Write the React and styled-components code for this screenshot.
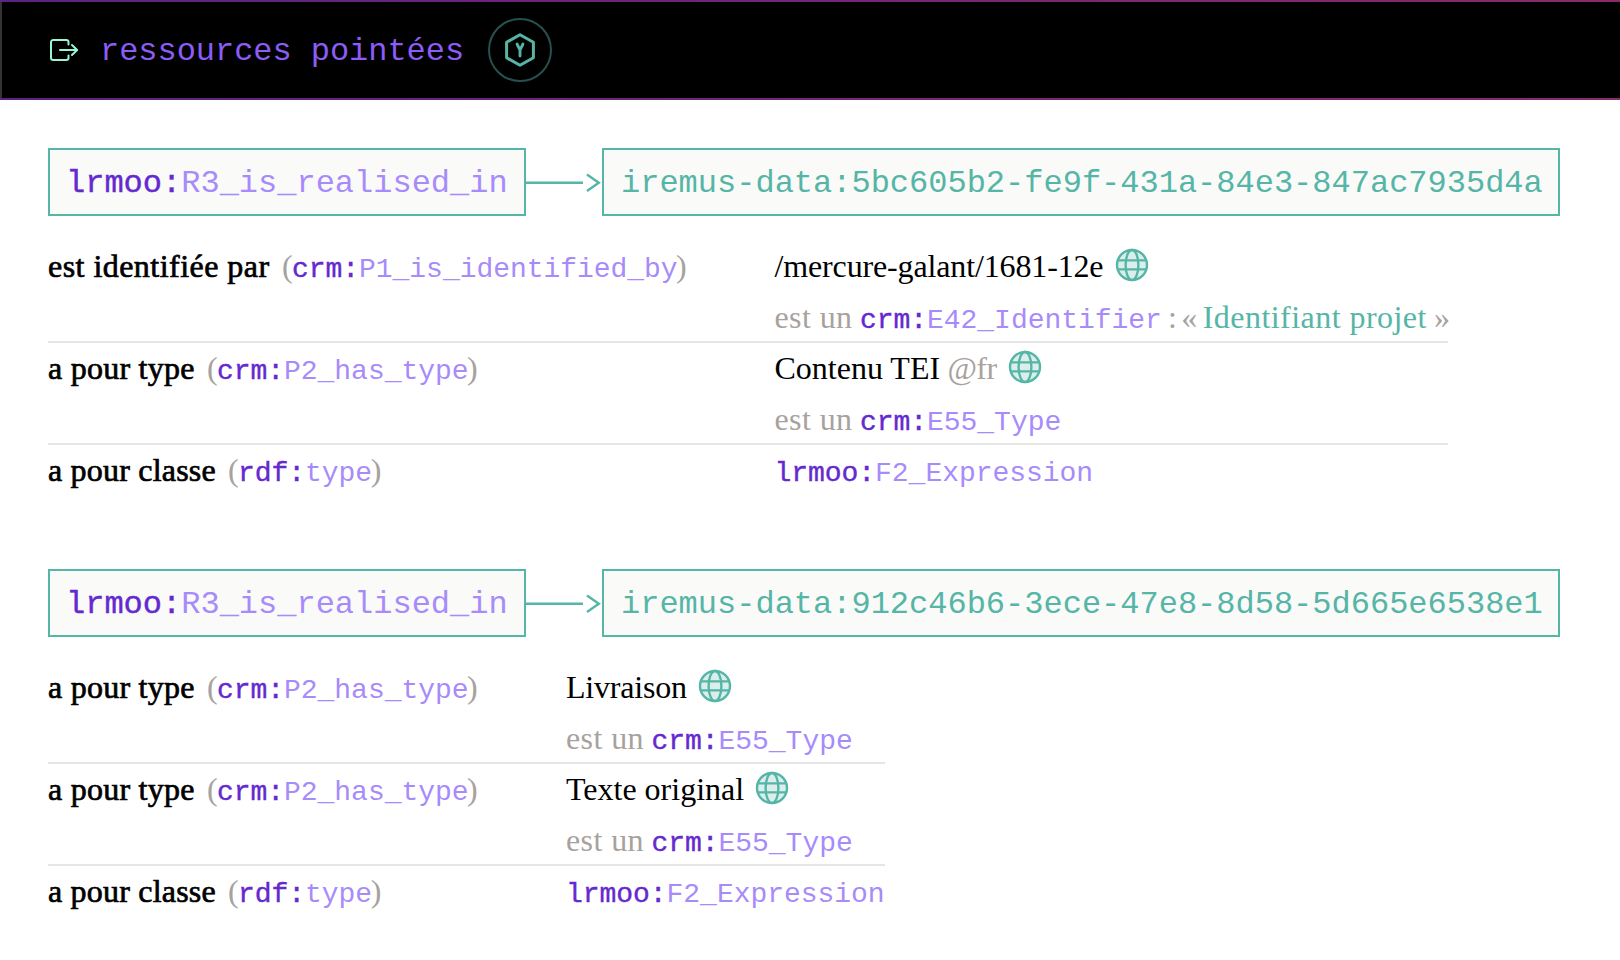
import React from "react";
import styled, { createGlobalStyle } from "styled-components";

const GlobalStyle = createGlobalStyle`
  * { box-sizing: border-box; }
  body { margin: 0; background: #fff; font-family: "Liberation Serif", serif; font-size: 32px; color: #000; }
`;

const Header = styled.header`
  display: flex;
  align-items: center;
  height: 100px;
  padding-left: 48px;
  border: 0 solid transparent;
  border-width: 2px 0;
  box-shadow: inset 2px 0 0 #333;
  background:
    linear-gradient(#000, #000) padding-box,
    linear-gradient(90deg, #5b2383, #8a2a6b) border-box;
`;

const Title = styled.h1`
  margin: 0 0 0 20px;
  padding-top: 4px;
  width: 364px;
  font: 400 32px/44px "Liberation Mono", monospace;
  letter-spacing: -0.04px;
  color: #8b5cf6;
  white-space: pre;
`;

const Badge = styled.div`
  display: flex;
  align-items: center;
  justify-content: center;
  width: 64px;
  height: 64px;
  margin-left: 24px;
  border: 2px solid #25514f;
  border-radius: 50%;
`;

const Main = styled.main`
  padding: 48px 48px 0;
`;

const Resource = styled.section`
  height: 421px;
`;

const Relation = styled.div`
  display: flex;
  align-items: center;
  height: 68px;
`;

const Box = styled.div`
  width: ${(p) => p.$w}px;
  height: 68px;
  padding: 2px 0 0 ${(p) => p.$pad || 16}px;
  border: 2px solid #55b5a6;
  background: #fafaf9;
  font: 400 32px/64px "Liberation Mono", monospace;
  color: #55b5a6;
  white-space: nowrap;
`;

const ArrowDrawing = styled.svg`
  flex: none;
  width: 76px;
  height: 32px;
`;

const Prefix = styled.span`
  color: #6429cf;
  -webkit-text-stroke: 0.4px #6429cf;
`;

const Local = styled.span`
  color: #a78bfa;
`;

const Code = styled.span`
  font-family: "Liberation Mono", monospace;
  font-size: 28px;
  line-height: 1;
  letter-spacing: -0.04px;
`;

const Properties = styled.div`
  width: ${(p) => p.$width}px;
  margin-top: 25px;
`;

const Row = styled.div`
  display: grid;
  grid-template-columns: ${(p) => p.$label}px 1fr;
  height: 102px;
  border-bottom: ${(p) => (p.$last ? "0" : "2px solid #e5e5e5")};
  white-space: nowrap;
`;

const Line = styled.div`
  height: 51px;
  line-height: 51px;
`;

const Text = styled.span`
  display: inline-block;
  width: ${(p) => (p.$w ? `${p.$w}px` : "auto")};
  margin-left: ${(p) => p.$ml || 0}px;
  letter-spacing: ${(p) => p.$ls || 0}px;
  color: ${(p) => p.$color || "#000"};
  -webkit-text-stroke: ${(p) => (p.$medium ? "0.7px #000" : "0")};
  white-space: pre;
`;

const Globe = styled.svg`
  margin-left: 11px;
  vertical-align: -5px;
`;

const GREY = "#a8a29e";

function Term({ name }) {
  const [prefix, local] = name.split(":");
  return (
    <>
      <Prefix>{prefix}:</Prefix>
      <Local>{local}</Local>
    </>
  );
}

function GlobeIcon() {
  return (
    <Globe width="34" height="34" viewBox="0 0 34 34" fill="none" stroke="#55b5a6" strokeWidth="2.4">
      <circle cx="17" cy="17" r="15" fill="#dceeeb" />
      <ellipse cx="17" cy="17" rx="6.4" ry="15" />
      <path d="M3 12.4h28M3 21.4h28" />
    </Globe>
  );
}

function ExportIcon() {
  return (
    <svg width="32" height="32" viewBox="0 0 32 32" fill="none" stroke="#99f6d4" strokeWidth="2" strokeLinecap="round" strokeLinejoin="round">
      <path d="M20.5 10.5V8.200A2.200 2.200 0 0 0 18.300 6H5.200A2.200 2.200 0 0 0 3 8.200V23.800A2.200 2.200 0 0 0 5.200 26H18.300A2.200 2.200 0 0 0 20.500 23.800V21.500M12 16h17M24 11l5.200 5-5.200 5" />
    </svg>
  );
}

function HexagonIcon() {
  return (
    <svg width="32" height="36" viewBox="0 0 32 36" fill="none" stroke="#55b5a6" strokeLinejoin="round" strokeLinecap="round">
      <path d="M16 2.800 29.400 10.200v15.600L16 33.200 2.600 25.800V10.200z" strokeWidth="3" />
      <path d="M13 12l3 6 3-6M16 18v6" strokeWidth="2.8" />
    </svg>
  );
}

function Arrow() {
  return (
    <ArrowDrawing viewBox="0 0 76 32" fill="none" stroke="#55b5a6" strokeWidth="2.4">
      <path d="M0 16.700h57M61 8.500l11.800 8.200L61 25" />
    </ArrowDrawing>
  );
}

function Label({ text, w, ls, term }) {
  return (
    <Line>
      <Text $w={w} $ls={ls} $medium>{text}</Text>
      <Text $color={GREY} $w={10}>(</Text>
      <Code><Term name={term} /></Code>
      <Text $color={GREY} $ml={-1.5}>)</Text>
    </Line>
  );
}

const resources = [
  {
    id: "5bc605b2-fe9f-431a-84e3-847ac7935d4a",
    width: 1400,
    label: 726.5,
    rows: [
      { label: "est identifiée par", w: 234, ls: 0.46, term: "crm:P1_is_identified_by", value: "/mercure-galant/1681-12e", vw: 329, vls: -0.14, cls: "crm:E42_Identifier", kind: "Identifiant projet" },
      { label: "a pour type", w: 159, ls: 0.25, term: "crm:P2_has_type", value: "Contenu TEI", vw: 173, lang: "@fr", cls: "crm:E55_Type" },
      { label: "a pour classe", w: 180, ls: 0.2, term: "rdf:type", cls: "lrmoo:F2_Expression" },
    ],
  },
  {
    id: "912c46b6-3ece-47e8-8d58-5d665e6538e1",
    width: 837,
    label: 518,
    rows: [
      { label: "a pour type", w: 159, ls: 0.25, term: "crm:P2_has_type", value: "Livraison", vw: 121, vls: -0.2, cls: "crm:E55_Type" },
      { label: "a pour type", w: 159, ls: 0.25, term: "crm:P2_has_type", value: "Texte original", vw: 178, cls: "crm:E55_Type" },
      { label: "a pour classe", w: 180, ls: 0.2, term: "rdf:type", cls: "lrmoo:F2_Expression" },
    ],
  },
];

function Value({ row }) {
  if (!row.value) return <Line><Code><Term name={row.cls} /></Code></Line>;
  return (
    <div>
      <Line>
        <Text $w={row.vw} $ls={row.vls}>{row.value}</Text>
        {row.lang && <Text $w={49} $ls={-0.6} $color={GREY}>{row.lang}</Text>}
        <GlobeIcon />
      </Line>
      <Line>
        <Text $w={85.5} $ls={0.4} $color={GREY}>est un</Text>
        <Code><Term name={row.cls} /></Code>
        {row.kind && (
          <>
            <Text $w={41} $ls={-1.8} $color={GREY}> : «</Text>
            <Text $w={225} $ls={0.45} $color="#55b5a6">{row.kind}</Text>
            <Text $ls={-1.8} $color={GREY}> »</Text>
          </>
        )}
      </Line>
    </div>
  );
}

export default function App() {
  return (
    <>
      <GlobalStyle />
      <Header>
        <ExportIcon />
        <Title>ressources pointées</Title>
        <Badge><HexagonIcon /></Badge>
      </Header>
      <Main>
        {resources.map((r) => (
          <Resource key={r.id}>
            <Relation>
              <Box $w={478}><Term name="lrmoo:R3_is_realised_in" /></Box>
              <Arrow />
              <Box $w={958} $pad={17}>iremus-data:{r.id}</Box>
            </Relation>
            <Properties $width={r.width}>
              {r.rows.map((row, i) => (
                <Row key={i} $label={r.label} $last={i === r.rows.length - 1}>
                  <Label text={row.label} w={row.w} ls={row.ls} term={row.term} />
                  <Value row={row} />
                </Row>
              ))}
            </Properties>
          </Resource>
        ))}
      </Main>
    </>
  );
}
